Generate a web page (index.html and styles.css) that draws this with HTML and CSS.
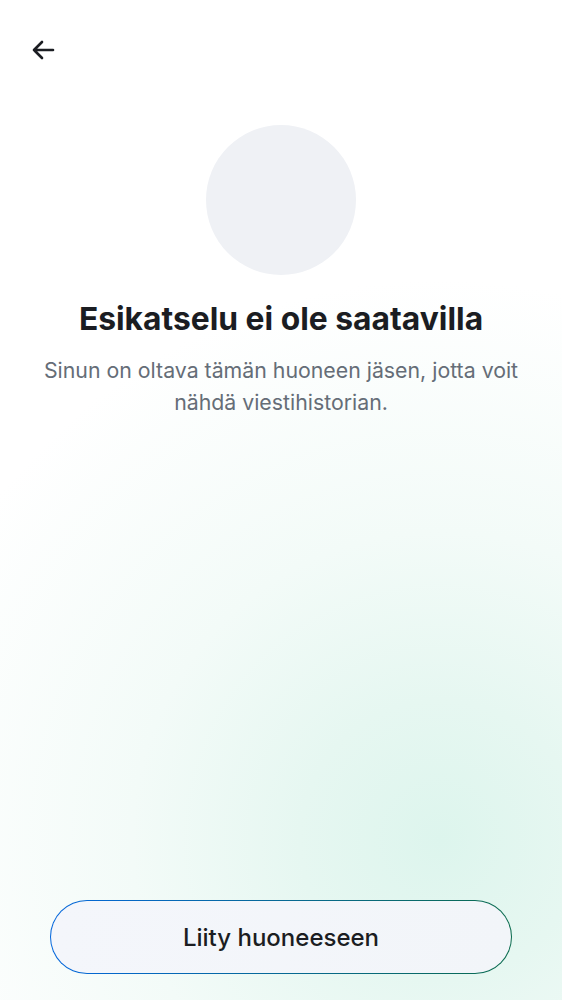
FILE: index.html
```html
<!DOCTYPE html>
<html lang="fi">
<head>
<meta charset="utf-8">
<link rel="stylesheet" href="styles.css">
</head>
<body>
<div class="screen">
  <header class="topbar">
    <button class="back" aria-label="Takaisin">
      <svg width="30" height="30" viewBox="0 0 24 24"><path d="M20 12H4.8M11.2 5.6 4.8 12l6.4 6.4" fill="none" stroke="#1b1d22" stroke-width="2.1" stroke-linecap="round" stroke-linejoin="round"/></svg>
    </button>
  </header>
  <main class="content">
    <div class="avatar"></div>
    <h1 class="title">Esikatselu ei ole saatavilla</h1>
    <p class="subtitle">Sinun on oltava tämän huoneen jäsen, jotta voit nähdä viestihistorian.</p>
  </main>
  <footer class="actions">
    <button class="join"><span>Liity huoneeseen</span></button>
  </footer>
</div>
</body>
</html>
```
FILE: styles.css
```css
html, body {
  margin: 0;
  padding: 0;
}
body {
  font-family: Inter, Roboto, sans-serif;
  background: #ffffff;
}
.screen {
  width: 562px;
  height: 1000px;
  display: flex;
  flex-direction: column;
  background:
    radial-gradient(circle 560px at 440px 840px, #ddf5ed 0%, #e6f7f1 25%, #f3fbf8 55%, rgba(255,255,255,0) 100%),
    #ffffff;
  box-sizing: border-box;
}
.topbar {
  height: 100px;
  padding: 22px 0 0 15px;
  box-sizing: border-box;
}
.back {
  width: 56px;
  height: 56px;
  border: 0;
  background: none;
  padding: 0;
  display: flex;
  align-items: center;
  justify-content: center;
}
.content {
  flex: 1;
  display: flex;
  flex-direction: column;
  align-items: center;
  padding: 25px 32px 0;
}
.avatar {
  width: 150px;
  height: 150px;
  border-radius: 50%;
  background: #eff1f5;
}
.title {
  margin: 24px 0 0;
  font-size: 31.8px;
  line-height: 40px;
  font-weight: 700;
  color: #1b1d22;
  text-align: center;
  white-space: nowrap;
}
.subtitle {
  margin: 15px 0 0;
  font-size: 21.3px;
  line-height: 32px;
  color: #656d77;
  text-align: center;
}
.actions {
  padding: 0 50px 26px;
}
.join {
  width: 100%;
  height: 74px;
  border-radius: 37px;
  border: 1.5px solid transparent;
  background:
    linear-gradient(90deg, #f4f6fb, #f2f5f9) padding-box,
    linear-gradient(90deg, #0467dd, #0a6b4d) border-box;
  font-family: Inter, Roboto, sans-serif;
  font-size: 24px;
  font-weight: 500;
  color: #1b1d22;
  padding: 0;
}
```
